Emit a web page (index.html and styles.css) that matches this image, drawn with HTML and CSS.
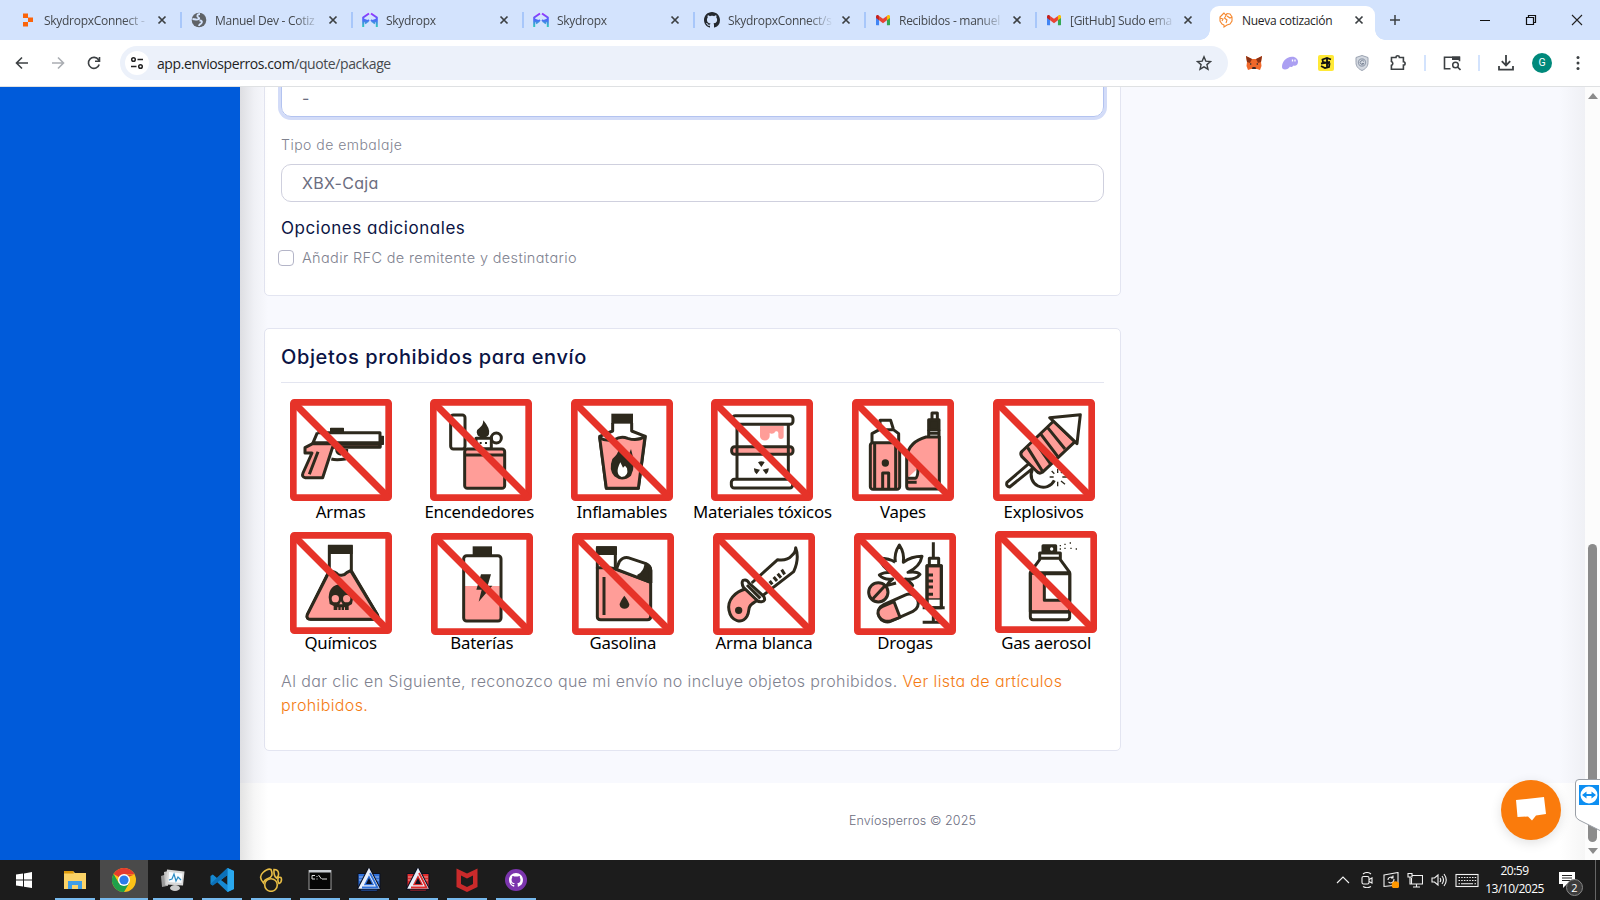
FILE: index.html
```html
<!DOCTYPE html>
<html lang="es">
<head>
<meta charset="utf-8">
<title>Nueva cotización</title>
<link rel="stylesheet" href="styles.css">
</head>
<body>
<svg class="defs" width="0" height="0">
  <defs>
    <linearGradient id="sky" gradientUnits="userSpaceOnUse" x1="0" y1="1" x2="0" y2="15"><stop offset="0" stop-color="#a02bff"/><stop offset=".5" stop-color="#4a6cf8"/><stop offset="1" stop-color="#2fd0b8"/></linearGradient>
    <symbol id="x" viewBox="0 0 10 10"><path d="M1.5 1.5l7 7M8.500 1.500l-7 7" stroke="currentColor" stroke-width="1.7" fill="none"/></symbol>
    <symbol id="skydropx" viewBox="0 0 16 16"><path d="M1.200 15V5.500L7 1.500M9 1.500l5.800 4V15M1.200 7.500L6.500 9.500M14.800 7.500L9.500 9.500M3 11.500l4-3.500M13 11.500L9 8" stroke="url(#sky)" stroke-width="2" fill="none"/></symbol>
    <symbol id="octocat" viewBox="0 0 16 16"><path fill-rule="evenodd" d="M8 0C3.580 0 0 3.580 0 8c0 3.540 2.290 6.530 5.470 7.590.4.070.55-.17.55-.38 0-.19-.01-.82-.01-1.490-2.010.37-2.530-.49-2.690-.94-.09-.23-.48-.94-.82-1.130-.28-.15-.68-.52-.01-.53.63-.01 1.080.58 1.230.82.72 1.210 1.870.87 2.330.66.070-.52.28-.87.51-1.070-1.780-.2-3.640-.89-3.640-3.950 0-.87.31-1.590.82-2.150-.08-.2-.36-1.020.08-2.120 0 0 .67-.21 2.200.82.64-.18 1.320-.27 2-.27s1.360.09 2 .27c1.530-1.040 2.200-.82 2.200-.82.44 1.100.16 1.920.08 2.120.51.56.82 1.270.82 2.150 0 3.070-1.870 3.750-3.650 3.950.29.25.54.73.54 1.480 0 1.070-.01 1.930-.01 2.200 0 .21.15.46.55.38A8.010 8.010 0 0 0 16 8c0-4.420-3.580-8-8-8z" fill="currentColor"/></symbol>
    <symbol id="gmail" viewBox="0 0 16 12"><path d="M0 2v9.200c0 .5.300.8.800.8H3.500V4z" fill="#4285f4"/><path d="M16 2v9.200c0 .5-.3.800-.8.800H12.500V4z" fill="#34a853"/><path d="M12.500 1v5L16 3.300V1.700C16 .200 14.300-.4 13.200.400z" fill="#fbbc04"/><path d="M3.500 6V1L8 4.300 12.500 1v5L8 9.300z" fill="#ea4335"/><path d="M0 1.700v1.600L3.500 6V1L2.800.400C1.700-.4 0 .200 0 1.700z" fill="#c5221f"/></symbol>
    <symbol id="autoA" viewBox="0 0 24 24"><path d="M1 5.500h22v13L20 23H4l-3-4.500z" fill="currentColor" stroke="#0b1020"/><path d="M2 9h20M2 12h20" stroke="#fff" stroke-opacity=".35" stroke-width="1.500"/><path d="M12 3.500L20 19H4z" fill="none" stroke="#0b1020" stroke-width="5.500"/><path d="M12 3.500L20 19H4z" fill="currentColor" stroke="#e9effa" stroke-width="3.400"/><path d="M13 5L20.500 19.500H5" fill="none" stroke="currentColor" stroke-width="1.800"/><path d="M12 10l3 6H9z" fill="#0b1020"/></symbol>
    <symbol id="ban" viewBox="0 0 306 306"><rect x="10" y="10" width="286" height="286" rx="3" fill="none" stroke="#e63329" stroke-width="20" stroke-linejoin="round"/><path d="M16 16L290 290" stroke="#e63329" stroke-width="21"/></symbol>
  </defs>
</svg>

<div class="screen">
  <header class="tabstrip">
    <div class="tab"><svg class="fav" viewBox="0 0 16 16"><path d="M3 1.500h5V6H3zM8 5.500h5V10H8zM3 10h5v4.500H3z" fill="#fb640a"/></svg><span class="tab-text">SkydropxConnect -</span><svg class="close"><use href="#x"/></svg></div>
    <div class="tab"><svg class="fav" viewBox="0 0 16 16"><circle cx="8" cy="8" r="7.300" fill="#5f6368"/><path d="M9 2C6 2 5.500 4.500 7.500 5.500S7 8 5 7.500L1.500 7M8.500 8.500c2.500 0 3 1 2 2.500S8 12 8 14" stroke="#d3e3fd" stroke-width="1.800" fill="none"/></svg><span class="tab-text">Manuel Dev - Cotiz</span><svg class="close"><use href="#x"/></svg></div>
    <div class="tab"><svg class="fav"><use href="#skydropx"/></svg><span class="tab-text">Skydropx</span><svg class="close"><use href="#x"/></svg></div>
    <div class="tab"><svg class="fav"><use href="#skydropx"/></svg><span class="tab-text">Skydropx</span><svg class="close"><use href="#x"/></svg></div>
    <div class="tab"><svg class="fav dark"><use href="#octocat"/></svg><span class="tab-text">SkydropxConnect/s</span><svg class="close"><use href="#x"/></svg></div>
    <div class="tab"><svg class="fav"><use href="#gmail" x="1" y="3" width="14" height="10.500"/></svg><span class="tab-text">Recibidos - manuel</span><svg class="close"><use href="#x"/></svg></div>
    <div class="tab last"><svg class="fav"><use href="#gmail" x="1" y="3" width="14" height="10.500"/></svg><span class="tab-text">[GitHub] Sudo ema</span><svg class="close"><use href="#x"/></svg></div>
    <div class="tab active"><svg class="fav" viewBox="0 0 16 16"><path d="M6 1L4 3 2 5v4l2 3 2 1v2l3-2 3-1 2-3V5l-2-3-3-.5-1 2L6 1zM8 3.500L6.500 6 9 8l-1 3M2 6l3 1-1 2M9 4l3 2 2-1" stroke="#f5882f" stroke-width="1.100" fill="none"/></svg><span class="tab-text">Nueva cotización</span><svg class="close"><use href="#x"/></svg></div>
    <svg class="plus" viewBox="0 0 12 12"><path d="M6 1v10M1 6h10" stroke="#3c4043" stroke-width="1.500"/></svg>
    <div class="winctl">
      <svg viewBox="0 0 12 12"><path d="M1 6.500h10" stroke="#111"/></svg>
      <svg viewBox="0 0 12 12"><path d="M1.500 3.500h7v7h-7zM3.500 3.500v-2h7v7h-2" stroke="#111" stroke-width="1.200" fill="none"/></svg>
      <svg viewBox="0 0 12 12"><path d="M1 1l10 10M11 1L1 11" stroke="#222" stroke-width="1.100"/></svg>
    </div>
  </header>

  <nav class="toolbar">
    <div class="navbtns">
      <svg viewBox="0 0 16 16"><path d="M14 8H3M8 2.500L2.500 8 8 13.500" stroke="#3c4043" stroke-width="1.600" fill="none"/></svg>
      <svg viewBox="0 0 16 16"><path d="M2 8h11M8 2.500L13.500 8 8 13.500" stroke="#aaadb2" stroke-width="1.600" fill="none"/></svg>
      <svg viewBox="0 0 16 16"><path d="M13.200 9.500A5.500 5.500 0 1 1 12.500 4.800L13.500 6M13.500 2v4.300H9" stroke="#3c4043" stroke-width="1.600" fill="none"/></svg>
    </div>
    <div class="omnibox">
      <span class="site"><svg viewBox="0 0 14 14"><circle cx="3.500" cy="3.500" r="1.800" fill="none" stroke="#222" stroke-width="1.500"/><path d="M7.500 3.500H13M1 10.500h5.500" stroke="#222" stroke-width="1.600"/><circle cx="10.500" cy="10.500" r="1.800" fill="none" stroke="#222" stroke-width="1.500"/></svg></span>
      <span class="url">app.enviosperros.com<span class="path">/quote/package</span></span>
      <svg class="star" viewBox="0 0 16 16"><path d="M8 1.800l1.800 4.300 4.700.4-3.600 3.100 1.100 4.600L8 11.800l-4 2.400 1.100-4.600L1.500 6.500l4.700-.4z" fill="none" stroke="#3c4043" stroke-width="1.400"/></svg>
    </div>
    <div class="exts">
      <svg viewBox="0 0 16 16"><path d="M0 1l6 3h4l6-3-1 6 .5 4-1.500 4-3-1H5l-3 1-1.500-4L1 7z" fill="#f0682a"/><path d="M0 1l6 3-2 4-3-1zM16 1l-6 3 2 4 3-1z" fill="#8c3214"/><path d="M6.500 12h3l.5 2H6z" fill="#3a2a2a"/><path d="M4 8l2 1-2 1zM12 8l-2 1 2 1z" fill="#333"/></svg>
      <svg viewBox="0 0 16 16"><path d="M0 12C0 7 4 1.800 10 1.800c4 0 6 2.700 6 5.200 0 3-2.500 4.500-4.500 3.500-1 1.500-2.500 2-3.500 1-1 1.800-3 3-5 3-2 0-3-1-3-2.500z" fill="#ab9ff2"/><path d="M10.500 4.500v2M13 4.500v2" stroke="#fff" stroke-width="1.300"/></svg>
      <svg viewBox="0 0 16 16"><rect width="16" height="16" rx="2" fill="#ffe937"/><path d="M13 4.500L9 3 4.500 4.500 5 7l6.500 2-.5 3-4 1-4-2M3 8.500L12 7M9 2.500v11" stroke="#111" stroke-width="1.800" fill="none"/></svg>
      <svg viewBox="0 0 16 16"><path d="M8 .5l6 2v5c0 4-2.500 6.500-6 8-3.500-1.500-6-4-6-8v-5z" fill="#d3d8e0" stroke="#9aa2b0"/><circle cx="8" cy="7.500" r="3.600" fill="none" stroke="#98a1b0" stroke-width="1.200"/><path d="M10 6.500a2 2 0 1 0 0 2H8" stroke="#7d8798" fill="none"/></svg>
      <svg viewBox="0 0 16 16"><path d="M1.500 2.500h4.500a1.700 1.700 0 0 1 3.400 0h4v4.200a1.700 1.700 0 0 1 0 3.400v4.200h-12v-4a2 2 0 0 0 0-3.800z" fill="none" stroke="#3c4043" stroke-width="1.600"/></svg>
      <i></i>
      <svg class="wide" viewBox="0 0 18 16"><path d="M7.500 13.700H1.500V2.200h15v4" fill="none" stroke="#3c4043" stroke-width="1.600"/><path d="M9 1.500h8V5H9z" fill="#3c4043"/><circle cx="12.500" cy="10" r="2.800" fill="none" stroke="#3c4043" stroke-width="1.500"/><path d="M14.500 12l3 3" stroke="#3c4043" stroke-width="1.600"/></svg>
      <i></i>
      <svg viewBox="0 0 16 16"><path d="M8 0v10M3.800 6.200L8 10.400l4.200-4.200M1 11v3.700h14V11" fill="none" stroke="#3c4043" stroke-width="1.800"/></svg>
      <b>G</b>
      <svg viewBox="0 0 16 16"><g fill="#3c4043"><circle cx="8" cy="2.500" r="1.500"/><circle cx="8" cy="8" r="1.500"/><circle cx="8" cy="13.500" r="1.500"/></g></svg>
    </div>
  </nav>

  <div class="viewport">
    <aside class="sidebar"></aside>
    <main class="page">
      <div class="content">
        <section class="card form">
          <div class="field focus">-</div>
          <label class="lbl">Tipo de embalaje</label>
          <div class="field">XBX-Caja</div>
          <h4>Opciones adicionales</h4>
          <div class="check"><span class="box"></span><span class="check-text">Añadir RFC de remitente y destinatario</span></div>
        </section>

        <section class="card banned">
          <h3>Objetos prohibidos para envío</h3>
          <div class="row one">
            <figure><svg viewBox="0 0 306 306"><g class="ink"><path class="pk" d="M68 134H270V144H128L98 236H46Q34 234 39 222L66 162H45V146z"/><path d="M82 101H270V144H128M82 101L68 134M68 131H270M84 158L58 226"/><path d="M124 180Q138 184 166 180Q170 174 170 150M140 150q0 14 14 16"/><path class="bk" d="M122 88h38v12h-38zM270 112h10v24h-10z" stroke-width="4"/></g><use href="#ban"/></svg><figcaption>Armas</figcaption></figure>
            <figure><svg viewBox="0 0 306 306"><g class="ink"><rect x="62" y="48" width="43" height="102" rx="8"/><path class="bk" stroke="none" d="M160 64Q182 90 177 106Q172 116 160 116Q142 116 140 100Q140 91 149 86Q159 80 160 64z"/><rect x="138" y="118" width="46" height="32"/><path d="M149 132h6M165 132h6" stroke-width="6"/><circle cx="199" cy="117" r="15"/><rect class="pk" x="104" y="150" width="120" height="118" rx="8"/><path d="M104 168H224"/></g><use href="#ban"/></svg><figcaption class="wide-cap">Encendedores</figcaption></figure>
            <figure><svg viewBox="0 0 306 306"><g class="ink"><path class="bk" stroke="none" d="M121 44h65v30h-65z"/><path d="M125 72V96L86 112L106 268H202L223 112L182 96V72"/><path class="pk" d="M86 116Q105 128 130 122Q150 110 170 118Q200 128 222 112L202 268H106z"/><path class="bk" stroke="none" d="M146 145Q142 165 124 180Q112 212 130 232Q154 252 180 230Q196 200 180 150L172 170Q160 160 146 145z"/><path d="M148 190Q130 225 152 234Q174 232 168 208L162 200 156 206z" fill="#fff" stroke="none"/></g><use href="#ban"/></svg><figcaption>Inflamables</figcaption></figure>
            <figure><svg viewBox="0 0 306 306"><g class="ink"><path d="M78 76V241M232 76V241"/><path class="pk" stroke="none" d="M147 80H218V112a8 8 0 0 1-16 0V104a6 6 0 0 0-12-2q-9 5-14 0V112a14 12 0 0 1-29 0z"/><rect x="64" y="50" width="182" height="26" rx="9"/><rect class="pk" x="62" y="143" width="184" height="23" rx="9"/><path d="M78 143v23M232 143v23"/><rect x="61" y="241" width="184" height="26" rx="9"/><path class="bk" stroke="none" d="M151 204L141 190Q151 184 161 190zM147 212L137 226Q128 220 129 208zM155 212L165 226Q174 220 173 208z"/></g><use href="#ban"/></svg><figcaption>Materiales tóxicos</figcaption></figure>
            <figure><svg viewBox="0 0 306 306"><g class="ink"><path d="M60 130V104L82 92H124L140 104V130M84 90V64H116L124 90"/><rect class="pk" x="55" y="131" width="88" height="140" rx="8"/><path d="M68 131V270M131 131V270M92 270V222H110V270"/><circle class="bk" cx="100" cy="192" r="8" stroke-width="6"/><path class="pk" d="M262 114V270H172Q164 270 164 262V172Q172 128 222 114z"/><path class="bk" d="M230 62h31v30h-31z"/><path d="M230 92V114M261 92V114M230 103h31M240 60V42h16V60"/><path d="M166 238H190Q198 236 198 208M166 250h28" fill="#fff"/></g><use href="#ban"/></svg><figcaption>Vapes</figcaption></figure>
            <figure><svg viewBox="0 0 306 306"><g class="ink"><path d="M118 212A32 32 0 1 0 184 244"/><path d="M112 190L42 250Q38 262 50 264L122 206" fill="#fff"/><path class="pk" d="M182 66L246 128L148 220Q138 226 130 216L86 172Q80 162 88 156z"/><path d="M104 146L148 216M124 126L172 194M144 106L194 172M164 86L216 150"/><path d="M170 56L262 47L252 134z" fill="#fff"/><path d="M194 222v-12M194 248v14M208 234h14M182 234h-12M204 222l8-10M204 246l12 10M184 224l-8-8" stroke-width="4"/></g><use href="#ban"/></svg><figcaption>Explosivos</figcaption></figure>
          </div>
          <div class="row two">
            <figure class="up1"><svg viewBox="0 0 306 306"><g class="ink"><path d="M118 40V116L52 248Q48 262 62 262H256Q268 262 262 248L184 116V40"/><path class="pk" d="M118 118Q136 118 144 128Q160 134 170 122L182 116L262 248Q268 262 256 262H62Q48 262 52 248z"/><path class="bk" stroke="none" d="M114 38h74v28h-74zM116 196Q118 158 152 157Q188 160 190 196L186 216L176 222V234H131V222L119 216z"/><g fill="#ff9d98" stroke="none"><circle cx="136" cy="200" r="11"/><circle cx="170" cy="200" r="11"/><path d="M153 208l5 9h-10zM142 226h3v10h-3zM152 226h3v10h-3zM162 226h3v10h-3z"/></g></g><use href="#ban"/></svg><figcaption>Químicos</figcaption></figure>
            <figure><svg viewBox="0 0 306 306"><g class="ink"><path class="bk" stroke="none" d="M125 40h58v26h-58z"/><path class="pk" stroke="none" d="M98 159H210V264H98z"/><rect x="98" y="68" width="112" height="196" rx="9"/><path class="bk" stroke="none" d="M150 124H180L170 158H184L143 206L152 170H136z"/></g><use href="#ban"/></svg><figcaption>Baterías</figcaption></figure>
            <figure><svg viewBox="0 0 306 306"><g class="ink"><path class="pk" d="M76 104H112L134 108L236 148V252Q236 260 226 260H86Q76 260 76 252z"/><path d="M76 106V44H130V108" /><path class="bk" stroke="none" d="M72 40h63v26H72zM212 88Q240 92 241 112V150L192 132Z"/><path d="M134 106L142 86Q152 72 168 74L222 92Q236 98 236 112V148L130 108z" fill="#fff"/><path class="bk" d="M222 94Q234 102 234 114V144L200 128Q218 120 222 94z"/><path d="M96 132V246"/><path class="bk" stroke="none" d="M157 188Q142 208 143 216A15 15 0 0 0 172 216Q172 208 157 188z"/></g><use href="#ban"/></svg><figcaption>Gasolina</figcaption></figure>
            <figure><svg viewBox="0 0 306 306"><g class="ink"><path d="M116 150L194 80Q222 84 236 68Q248 58 248 44Q260 76 242 116L146 190"/><path d="M170 144l8 10M182 132l10 12M194 122l10 12M206 110l9 14"/><path class="pk" d="M98 168C66 176 42 202 48 232C54 266 88 274 102 250C114 228 96 222 134 202z"/><path d="M90 142q12-4 18 8L152 190q8 14-6 16Q136 208 128 198L92 164Q84 150 90 142z" fill="#fff"/><path d="M102 156L142 196"/><circle class="bk" cx="77" cy="232" r="8" stroke-width="6"/></g><use href="#ban"/></svg><figcaption>Arma blanca</figcaption></figure>
            <figure><svg viewBox="0 0 306 306"><g class="ink"><path d="M124 88Q120 60 136 36Q152 60 148 88Q172 70 204 70Q198 102 162 118Q190 114 198 124Q184 142 154 138Q172 148 176 158L146 150M124 88Q106 76 76 76Q84 102 112 118Q88 118 76 126Q90 142 116 138Q102 148 98 158L126 150"/><path class="pk" d="M219 98H262V200H219z"/><path d="M219 200V224H262V200" fill="#fff"/><path d="M219 98V224H262V98zM226 94V76H254V94M238 72V28M219 126h18M219 144h18M219 162h18M219 184h18M206 224H272M238 224V268M206 268H260"/><circle class="pk" cx="73" cy="178" r="29"/><path d="M93 158L54 200"/><rect x="70" y="198" width="126" height="54" rx="27" transform="rotate(-24 133 225)"/><path class="pk" d="M120 206L138 253L112 263C78 274 56 232 86 220z"/></g><use href="#ban"/></svg><figcaption>Drogas</figcaption></figure>
            <figure class="up2"><svg viewBox="0 0 306 306"><g class="ink"><path class="pk" d="M106 126H224V242H106z"/><path d="M106 246V124L134 86V66H196V86L224 124V258Q224 266 216 266H114Q106 266 106 258V242M132 82H198M106 126H224M106 243H224"/><path class="bk" d="M144 44h38v20h-38z"/><circle cx="170" cy="54" r="5" fill="#fff" stroke="none"/><path d="M148 128h76v80h-76z" fill="#fff"/><path d="M194 44h4M194 54h4M208 40h4M208 52h4M224 36h4M226 52h4M242 54h4" stroke-width="4"/></g><use href="#ban"/></svg><figcaption>Gas aerosol</figcaption></figure>
          </div>
          <p>Al dar clic en Siguiente, reconozco que mi envío no incluye objetos prohibidos. <a>Ver lista de artículos<br>prohibidos.</a></p>
        </section>
      </div>
      <footer class="foot">Envíosperros © 2025</footer>
    </main>
    <div class="scroll"><svg viewBox="0 0 10 6"><path d="M5 0l5 6H0z" fill="#8b8b8b"/></svg><span class="thumb"></span><svg viewBox="0 0 10 6"><path d="M0 0h10L5 6z" fill="#8b8b8b"/></svg></div>
    <div class="chat"><svg viewBox="0 0 30 26"><path d="M0 3L28 0l2 17-10 1.500-4 5-4-4L1.500 20z" fill="#fff"/></svg></div>
    <svg class="tv" viewBox="0 0 25 52"><path d="M26 .5H4Q.5.500.500 4V36Q.5 39 4 41L26 52" fill="#fff" stroke="#9a9fa6"/><rect x="4" y="6" width="20" height="20" fill="#0d8ff2"/><circle cx="14" cy="16" r="8.500" fill="#fff"/><path d="M7 16l4.500-3.500V15h5v-2.500L21 16l-4.500 3.500V17h-5v2.500z" fill="#0d8ff2"/></svg>
  </div>

  <footer class="taskbar">
    <div class="apps">
      <div class="app start"><svg viewBox="0 0 24 24"><path d="M4 6.500l7-1v6H4zM12 5.400L20 4v7.500h-8zM4 12.500h7v6l-7-1zM12 12.500h8V20l-8-1.300z" fill="#fff"/></svg></div>
      <div class="app run"><svg viewBox="0 0 24 24"><path d="M1 3h9l2 2h11v16H1z" fill="#fbd367"/><path d="M1 3h9l1 2.500H1z" fill="#dd9a0c"/><path d="M5 21v-8h14v8h-4v-4H9v4z" fill="#3f9de6"/></svg></div>
      <div class="app run cur"><svg viewBox="0 0 24 24"><circle cx="12" cy="12" r="12" fill="#fbc117"/><path d="M12 12L1.600 6A12 12 0 0 1 22.400 6H12z" fill="#e33b2e"/><path d="M1.600 6A12 12 0 0 0 12 24l5.200-9L12 12 6.800 15z" fill="#1fa04b"/><path d="M22.400 6.500H12v4z" fill="#e33b2e"/><circle cx="12" cy="12" r="6" fill="#fff"/><circle cx="12" cy="12" r="4.600" fill="#2c7bea"/></svg></div>
      <div class="app run"><svg viewBox="0 0 24 24"><path d="M0 8l6-2v12l-5 1z" fill="#999"/><path d="M3 4l4-1v15l-3-1z" fill="#c4c4c4"/><path d="M6 1.500l17.500 2-1.500 14L5 16.500z" fill="#d8d8d8"/><path d="M8 4l13.500 1.500-1 9.500L7.500 14z" fill="#f8fcff"/><path d="M8 12l3-1 2-5 2 7 2-4 3 3" stroke="#2b8cc4" fill="none" stroke-width="1.200"/><ellipse cx="14" cy="20" rx="5" ry="3" fill="#ccc"/></svg></div>
      <div class="app run"><svg viewBox="0 0 24 24"><path d="M17.500 0L24 3v18l-6.500 3L7 14 2.800 17.500.500 16V8l2.300-1.500L7 10zM17.500 7l-6.500 5 6.500 5z" fill="#1689d2" fill-rule="evenodd"/><path d="M17.500 0L24 3v18l-6.500 3z" fill="#2aa8ee"/><path d="M.500 16L17.500 0v7L2.800 17.500z" fill="#0b70b8"/></svg></div>
      <div class="app run"><svg viewBox="0 0 24 24"><g fill="none" stroke="#e8bd45" stroke-width="1.600"><path d="M4.500 15Q-1 9 4 4.500T12 1.500Q15 9 9 10.500Q5 12 4.500 15zM15 1.500q4 0 4.500 3.500t-2 5q-3-2-2.500-8.500zM19.500 9.500q3-1 3 2t-2.500 4q-2-3-.5-6z"/><circle cx="12" cy="17" r="6.300"/></g></svg></div>
      <div class="app run"><svg viewBox="0 0 24 24"><rect x="1" y="2.500" width="22" height="19" fill="#050505" stroke="#9b9b9b"/><path d="M1 2h22v2.500H1z" fill="#c8ccd2"/><path d="M7 7.500H4v3.500h3M9 8v1M9 10.500v1M10.500 7l3 4M14 11h5" stroke="#ddd" fill="none"/></svg></div>
      <div class="app run blue"><svg><use href="#autoA"/></svg></div>
      <div class="app run red"><svg><use href="#autoA"/></svg></div>
      <div class="app run"><svg viewBox="0 0 24 24"><path d="M1.500.500L12 5.500 22.500.500V19L12 24 1.500 19z" fill="#c92a2b"/><path d="M6 7.500l6 3 6-3V16l-6 3-6-3z" fill="#1c1c1c"/></svg></div>
      <div class="app run"><svg viewBox="0 0 24 24"><circle cx="12" cy="12" r="11" fill="#7b35ad"/><use href="#octocat" x="5" y="5" width="14" height="14" color="#fff"/></svg></div>
    </div>
    <div class="tray">
      <svg viewBox="0 0 16 16"><path d="M2 11l6-6 6 6" class="w"/></svg>
      <svg viewBox="0 0 16 16"><rect x="3" y="4.500" width="7" height="7.500" rx="1.500" class="w"/><path d="M10 7.500l3-1.500v5l-3-1.500M4 2q4-3 8 0M4 14.500q4 2.500 8 0" class="w"/></svg>
      <svg viewBox="0 0 16 16"><path d="M1 3l14-2.500V13L1 14.500zM5 8q0-3 4-3l1 1M11 7q0 4-4 4l-1.500-1M10 3.500V6H8" class="w"/><circle cx="12.500" cy="13" r="3.800" fill="#ff9800"/></svg>
      <svg viewBox="0 0 16 16"><path d="M5 3.500h10.500v8.500H4.500V6M9.500 12v3M6 15h7M1 1.500h4V5H1zM3 5v7h1.500" class="w"/></svg>
      <svg viewBox="0 0 16 16"><path d="M1 6h2.500L7 3v10L3.500 10H1zM9 6q1.500 2 0 4M11 4q3 4 0 8M13 2q4.500 6 0 12" class="w"/></svg>
      <svg class="kb" viewBox="0 0 24 16"><rect x="1" y="2.500" width="22" height="12" class="w"/><path d="M3.500 5.500h18M3.500 8.500h18" class="w" stroke-dasharray="1.500 1.200"/><path d="M6 11.800h12M3.500 11.800H5M19.500 11.800H21" class="w"/></svg>
      <div class="clock"><span>20:59</span><span>13/10/2025</span></div>
      <div class="notif"><svg viewBox="0 0 18 18"><path d="M1 1h16v12H9l-4 4v-4H1z" fill="#fff"/><path d="M4 4.500h10M4 7h10M4 9.500h10" stroke="#222"/></svg><span class="count">2</span></div>
    </div>
  </footer>
</div>
</body>
</html>
```

FILE: styles.css
```css
* { box-sizing: border-box; }
body { margin: 0; font-family: Inter, "Open Sans", sans-serif; font-feature-settings: "cv11"; }
.defs { position: absolute; }
.screen { width: 1600px; height: 900px; display: flex; flex-direction: column; overflow: hidden; background: #fff; }
svg { display: block; flex: none; }

/* browser tabs */
.tabstrip { height: 40px; background: #d3e3fd; display: flex; padding-left: 10px; font: 12px "Open Sans", sans-serif; flex: none; }
.tab { width: 171px; height: 40px; display: flex; align-items: center; padding-left: 10px; color: #44484d; position: relative; flex: none; }
.tab::after { content: ""; position: absolute; right: -1px; top: 12px; width: 2px; height: 16px; background: #a8c7fa; }
.tab.last::after, .tab.active::after { display: none; }
.fav { width: 16px; height: 16px; }
.dark { color: #24292f; }
.tab-text { width: 108px; margin-left: 8px; letter-spacing: -.28px; white-space: nowrap; -webkit-mask-image: linear-gradient(90deg, #000 74%, transparent 98%); mask-image: linear-gradient(90deg, #000 74%, transparent 98%); }
.close { width: 10px; height: 10px; margin-left: 5px; color: #3c4043; }
.tab.active { background: #fff; width: 165px; height: 34px; margin: 6px 0 0 3px; padding: 0 0 6px 8px; border-radius: 9px 9px 0 0; color: #1f1f1f; }
.active .tab-text { -webkit-mask-image: none; mask-image: none; }
.active .close { margin-left: 4px; }
.tab.active::before { content: ""; position: absolute; left: -10px; right: -10px; bottom: 0; height: 10px; background: radial-gradient(circle at 0 0, transparent 9.5px, #fff 10px) left / 10px 10px no-repeat, radial-gradient(circle at 100% 0, transparent 9.5px, #fff 10px) right / 10px 10px no-repeat; }
.plus { width: 12px; height: 12px; margin: 14px 0 0 14px; }
.winctl { display: flex; gap: 34px; margin: 14px 17px 0 auto; }
.winctl svg { width: 12px; height: 12px; }

/* address bar */
.toolbar { height: 47px; display: flex; align-items: center; border-bottom: 1px solid #dfe1e3; flex: none; background: #fff; padding: 0 14px; }
.navbtns { display: flex; gap: 20px; }
.navbtns svg { width: 16px; height: 16px; }
.omnibox { width: 1108px; height: 34px; margin-left: 18px; border-radius: 17px; background: #ecf1fa; display: flex; align-items: center; padding: 0 16px 0 5px; flex: none; }
.site { width: 24px; height: 24px; border-radius: 50%; background: #fff; display: flex; align-items: center; justify-content: center; }
.site svg { width: 14px; height: 14px; }
.url { font: 14px "Open Sans", sans-serif; letter-spacing: -.41px; color: #1f1f1f; margin-left: 8px; }
.path { color: #474a4e; }
.star { width: 16px; height: 16px; margin-left: auto; }
.exts { display: flex; align-items: center; gap: 20px; margin-left: 18px; flex: none; }
.exts svg { width: 16px; height: 16px; }
.exts .wide { width: 18px; margin: 0 -1px; }
.exts i { width: 2px; height: 16px; background: #d3e3fd; margin: 0 -2px; }
.exts b { width: 20px; height: 20px; border-radius: 50%; background: #00897b; color: #fff; font: 10.500px/20px Roboto, sans-serif; text-align: center; margin: 0 -2px; }

/* page */
.viewport { height: 773px; display: flex; position: relative; flex: none; overflow: hidden; }
.sidebar { width: 240px; background: #005bda; flex: none; }
.page { width: 1345px; display: flex; flex-direction: column; background: #f8f9fe; position: relative; }
.page::before { content: ""; position: absolute; inset: 0 auto 0 0; width: 28px; background: linear-gradient(90deg, rgba(100,100,100,.18), rgba(100,100,100,.06) 50%, transparent); z-index: 2; }
.page::after { content: ""; position: absolute; inset: 0 0 0 auto; width: 26px; background: linear-gradient(270deg, rgba(100,100,100,.06), transparent); }
.content { height: 696px; padding-left: 24px; overflow: hidden; flex: none; }
.card { width: 857px; background: #fff; border: 1px solid #e3e5f1; border-radius: 5px; padding: 0 16px; }
.form { height: 213px; margin-top: -4px; }
.field { height: 38px; border: 1px solid #cfd0de; border-radius: 10px; display: flex; align-items: center; padding: 0 20px; color: #6b6d80; font-size: 16px; letter-spacing: .28px; }
.field.focus { height: 64px; margin-top: -31px; border-color: #b3c3f0; box-shadow: 0 0 0 3px #d3dcf8; padding-top: 26px; }
.lbl { display: block; font-size: 14px; font-weight: 300; color: #80828f; line-height: 20px; margin: 18px 0 9px; letter-spacing: .48px; }
.form h4 { margin: 15px 0 0; font-size: 17px; font-weight: 400; line-height: 22px; color: #0b1444; letter-spacing: .54px; }
.check { display: flex; align-items: center; margin: 10px 0 0 -3px; height: 18px; }
.box { width: 16px; height: 16px; border: 1px solid #b4b5c8; border-radius: 4px; }
.check-text { margin: -2px 0 0 8px; font-size: 14.500px; font-weight: 300; color: #80828f; letter-spacing: .36px; }
.banned { height: 423px; margin-top: 32px; }
.banned h3 { margin: 0; height: 54px; border-bottom: 1px solid #e3e5f0; padding-top: 14px; font-size: 20px; line-height: 28px; font-weight: 500; color: #0b1444; letter-spacing: .62px; }
.row { display: grid; }
.row.one { grid-template-columns: repeat(6, 140.600px); margin: 16px 0 0 -10.700px; height: 134px; }
.row.two { grid-template-columns: repeat(6, 141.100px); margin-left: -10.900px; height: 130px; }
figure { margin: 0; display: flex; flex-direction: column; align-items: center; }
figure svg { width: 102px; height: 102px; }
.up1, .up2 { margin-top: -1px; }
figcaption { font: 16.800px/22px "Noto Sans", "Open Sans", sans-serif; letter-spacing: -.2px; color: #000; white-space: nowrap; }
.wide-cap { margin-left: -4px; }
.two figcaption { margin-top: -3px; }
.two .up1 figcaption, .two .up2 figcaption { margin-top: -2px; }
.up2 { position: relative; top: -1px; }
.two .up2 figcaption { margin-top: -1px; }
.ink { fill: none; stroke: #2d291d; stroke-width: 9; stroke-linejoin: round; stroke-linecap: butt; }
.pk { fill: #ff9d98; }
.bk { fill: #2d291d; }
.banned p { margin: 6px 0 0; font-size: 16px; line-height: 24px; font-weight: 300; color: #80828f; white-space: nowrap; letter-spacing: .385px; }
.banned a { color: #f47b12; }
.foot { height: 77px; padding-bottom: 2px; background: #fff; display: flex; align-items: center; justify-content: center; font-size: 12.500px; font-weight: 300; color: #6b6d80; letter-spacing: .12px; }
.scroll { width: 15px; background: #fcfcfc; display: flex; flex-direction: column; align-items: center; padding: 6px 0; }
.scroll svg { width: 10px; height: 6px; }
.thumb { width: 9px; height: 298px; border-radius: 5px; background: #8b8b8b; margin: 445px 0 auto; }
.chat { position: absolute; left: 1501px; top: 693px; width: 60px; height: 60px; border-radius: 50%; background: #fa7b0c; display: flex; align-items: center; justify-content: center; box-shadow: 0 3px 12px rgba(0,0,0,.12); }
.chat svg { width: 30px; height: 26px; }
.tv { position: absolute; left: 1575px; top: 692px; width: 25px; height: 52px; }

/* taskbar */
.taskbar { height: 40px; background: #1c1c1c; display: flex; justify-content: space-between; flex: none; }
.apps { display: flex; gap: 1px; }
.app { width: 48px; height: 40px; display: flex; align-items: center; justify-content: center; position: relative; }
.app svg { width: 24px; height: 24px; }
.start { margin-right: 2px; }
.run::after { content: ""; position: absolute; left: 4px; right: 4px; bottom: 0; height: 2px; background: #76b9ed; }
.cur { background: #4a4a4a; }
.cur::after { left: 0; right: 0; }
.blue { color: #2e6fd8; }
.red { color: #dd2b2b; }
.tray { display: flex; align-items: center; color: #fff; }
.tray > svg { width: 16px; height: 16px; margin-right: 8px; }
.tray > .kb { width: 24px; }
.w { fill: none; stroke: #f2f2f2; stroke-width: 1.100; }
.clock { width: 55px; display: flex; flex-direction: column; align-items: center; font: 12px/18px "Open Sans", sans-serif; letter-spacing: -.5px; }
.notif { width: 54px; height: 40px; padding: 11px 0 0 16px; position: relative; border-right: 1px solid #666; margin-right: 4px; }
.notif svg { width: 18px; height: 18px; }
.count { position: absolute; left: 24px; top: 19px; width: 17px; height: 17px; border-radius: 50%; background: #3c3c3c; border: 1px solid #888; font: 11px/15px "Open Sans", sans-serif; text-align: center; }
```
